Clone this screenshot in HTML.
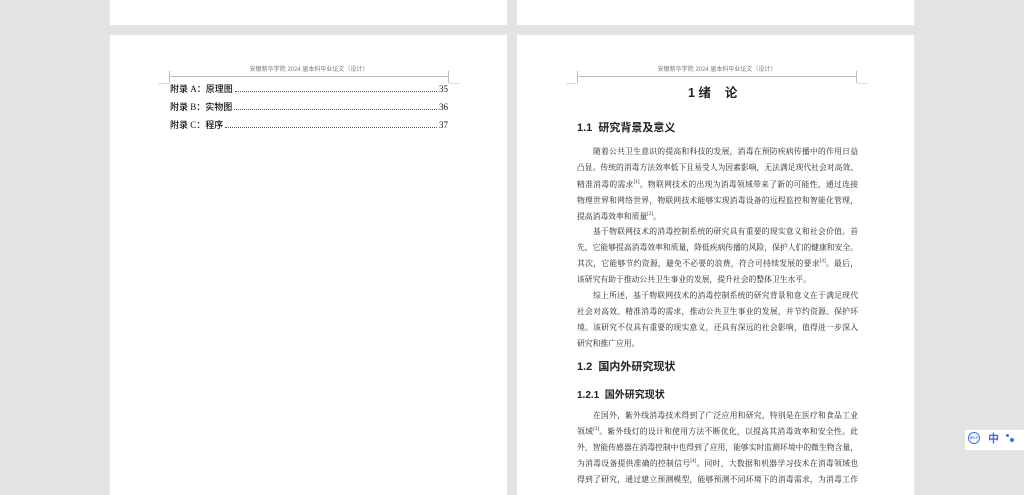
<!DOCTYPE html>
<html><head><meta charset="utf-8"><style>
body{margin:0;width:1024px;height:483px;background:#e3e3e3;position:relative;overflow:hidden;font-family:"Liberation Serif","Noto Serif CJK SC",serif;color:#222}
.pg{position:absolute;background:#fff}
.a{position:absolute;white-space:nowrap}
.hd{font-family:"Liberation Sans","Noto Sans CJK SC",sans-serif;font-size:6px;color:#777;text-align:center;width:280px}
.ln{position:absolute;background:#bbb}
.b{position:absolute;left:577px;width:281px;font-size:7.8px;line-height:12px;text-align:justify;text-align-last:justify;white-space:nowrap;color:#222;overflow:visible}
.b.i{left:593px;width:265px}
.b.e{text-align-last:left}
.h{font-family:"Liberation Sans","Noto Sans CJK SC",sans-serif;font-weight:bold;color:#222}
.toc{position:absolute;left:170px;width:278px;font-size:9px;line-height:12px;font-family:"Liberation Serif","Noto Sans CJK SC",serif;font-weight:500;display:flex;align-items:baseline;color:#111}
.toc .d{flex:1;border-bottom:1px dotted #555;margin:0 2px;height:8px}
.toc .n{font-weight:normal}
sup{font-size:5px;line-height:0;vertical-align:4px}
</style></head><body>
<div class="pg" style="left:110px;top:0;width:397px;height:25px"></div>
<div class="pg" style="left:517px;top:0;width:397px;height:25px"></div>
<div class="pg" style="left:110px;top:35px;width:397px;height:460px"></div>
<div class="pg" style="left:517px;top:35px;width:397px;height:460px"></div>

<div class="a hd" style="left:169px;top:64px">安徽新华学院 2024 届本科毕业论文（设计）</div>
<div class="ln" style="left:169px;top:76px;width:279px;height:1px"></div>
<div class="ln" style="left:169px;top:71px;width:1px;height:12px"></div>
<div class="ln" style="left:448px;top:71px;width:1px;height:12px"></div>
<div class="ln" style="left:158px;top:83px;width:11px;height:1px;background:#ddd"></div>
<div class="ln" style="left:449px;top:83px;width:11px;height:1px;background:#ddd"></div>

<div class="toc" style="top:83px"><span>附录 A：原理图</span><span class="d"></span><span class="n">35</span></div>
<div class="toc" style="top:101px"><span>附录 B：实物图</span><span class="d"></span><span class="n">36</span></div>
<div class="toc" style="top:119px"><span>附录 C：程序</span><span class="d"></span><span class="n">37</span></div>

<div class="a hd" style="left:577px;top:64px">安徽新华学院 2024 届本科毕业论文（设计）</div>
<div class="ln" style="left:577px;top:76px;width:279px;height:1px"></div>
<div class="ln" style="left:577px;top:71px;width:1px;height:12px"></div>
<div class="ln" style="left:856px;top:71px;width:1px;height:12px"></div>
<div class="ln" style="left:566px;top:83px;width:11px;height:1px;background:#ddd"></div>
<div class="ln" style="left:857px;top:83px;width:11px;height:1px;background:#ddd"></div>

<div class="a h" style="left:688px;top:82px;font-size:12.5px">1 绪 &nbsp;&nbsp;&nbsp;论</div>
<div class="a h" style="left:577px;top:119px;font-size:11px">1.1 &nbsp;研究背景及意义</div>
<div class="b i" style="top:146px">随着公共卫生意识的提高和科技的发展，消毒在预防疾病传播中的作用日益</div>
<div class="b" style="top:162px">凸显。传统的消毒方法效率低下且易受人为因素影响，无法满足现代社会对高效、</div>
<div class="b" style="top:179px">精准消毒的需求<sup>[1]</sup>。物联网技术的出现为消毒领域带来了新的可能性，通过连接</div>
<div class="b" style="top:195px">物理世界和网络世界，物联网技术能够实现消毒设备的远程监控和智能化管理，</div>
<div class="b e" style="top:211px">提高消毒效率和质量<sup>[2]</sup>。</div>
<div class="b i" style="top:226px">基于物联网技术的消毒控制系统的研究具有重要的现实意义和社会价值。首</div>
<div class="b" style="top:242px">先，它能够提高消毒效率和质量，降低疾病传播的风险，保护人们的健康和安全。</div>
<div class="b" style="top:258px">其次，它能够节约资源，避免不必要的浪费，符合可持续发展的要求<sup>[3]</sup>。最后，</div>
<div class="b e" style="top:274px">该研究有助于推动公共卫生事业的发展，提升社会的整体卫生水平。</div>
<div class="b i" style="top:290px">综上所述，基于物联网技术的消毒控制系统的研究背景和意义在于满足现代</div>
<div class="b" style="top:306px">社会对高效、精准消毒的需求，推动公共卫生事业的发展，并节约资源、保护环</div>
<div class="b" style="top:322px">境。该研究不仅具有重要的现实意义，还具有深远的社会影响，值得进一步深入</div>
<div class="b e" style="top:338px">研究和推广应用。</div>
<div class="a h" style="left:577px;top:358px;font-size:11px">1.2 &nbsp;国内外研究现状</div>
<div class="a h" style="left:577px;top:386px;font-size:10px">1.2.1 &nbsp;国外研究现状</div>
<div class="b i" style="top:410px">在国外，紫外线消毒技术得到了广泛应用和研究，特别是在医疗和食品工业</div>
<div class="b" style="top:426px">领域<sup>[3]</sup>。紫外线灯的设计和使用方法不断优化，以提高其消毒效率和安全性。此</div>
<div class="b" style="top:442px">外，智能传感器在消毒控制中也得到了应用，能够实时监测环境中的微生物含量，</div>
<div class="b" style="top:458px">为消毒设备提供准确的控制信号<sup>[4]</sup>。同时，大数据和机器学习技术在消毒领域也</div>
<div class="b" style="top:474px">得到了研究，通过建立预测模型，能够预测不同环境下的消毒需求，为消毒工作</div>

<div class="a" style="left:965px;top:430px;width:59px;height:20px;background:#fff"></div>
<div class="a" style="left:968px;top:432px;width:12px;height:12px;border:1.5px solid #3b6cf0;border-radius:50%;font:bold 4px 'Liberation Sans',sans-serif;color:#3b6cf0;text-align:center;line-height:9px;box-sizing:border-box">IFLY</div>
<div class="a" style="left:988px;top:430px;font:bold 11px 'Noto Sans CJK SC',sans-serif;color:#3b6cf0">中</div>
<div class="a" style="left:1006px;top:434px;width:3px;height:3px;border-radius:50%;background:#3b6cf0"></div>
<div class="a" style="left:1010px;top:438px;width:4px;height:4px;border-radius:50%;background:#3b6cf0"></div>
</body></html>
